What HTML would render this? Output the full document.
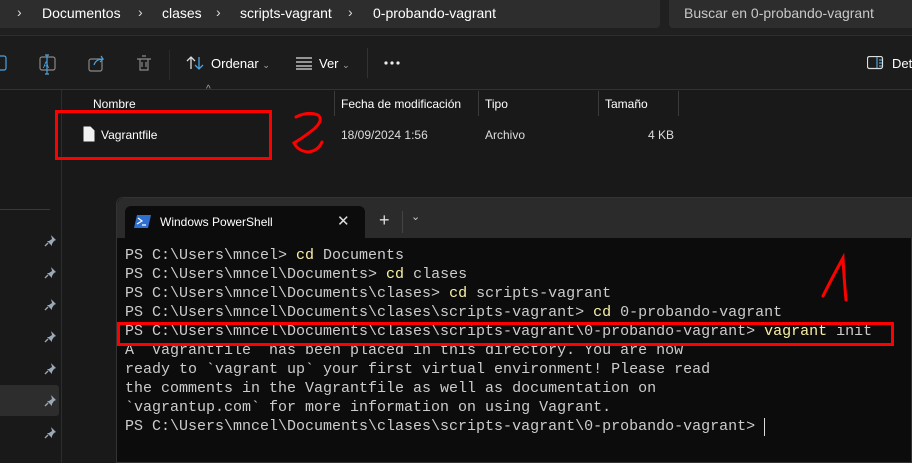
<!DOCTYPE html>
<html><head><meta charset="utf-8"><style>
*{margin:0;padding:0;box-sizing:border-box}
body{width:912px;height:463px;overflow:hidden;background:#191919;font-family:"Liberation Sans",sans-serif;position:relative;color:#fff}
.abs{position:absolute}
.t{font-size:13px;white-space:nowrap}
.term{font-family:"Liberation Mono",monospace;font-size:15px;line-height:19px;color:#cccccc;white-space:pre}
.y{color:#f9f1a5}
</style></head><body>
<div class="abs" style="left:0;top:0;width:912px;height:35px;background:#202020"></div>
<div class="abs" style="left:0;top:0;width:660px;height:28px;background:#2d2d2d;border-radius:0 0 4px 0"></div>
<div class="abs" style="left:669px;top:0;width:243px;height:28px;background:#2d2d2d;border-radius:0 0 0 4px"></div>
<div class="abs" style="left:0;top:35px;width:912px;height:1px;background:#2e2e2e"></div>
<div class="abs t" style="left:17px;top:4px;font-size:14px;color:#ddd;word-spacing:0">›</div>
<div class="abs t" style="left:42px;top:5px;font-size:14px">Documentos</div>
<div class="abs t" style="left:138px;top:4px;font-size:14px;color:#ddd">›</div>
<div class="abs t" style="left:162px;top:5px;font-size:14px">clases</div>
<div class="abs t" style="left:216px;top:4px;font-size:14px;color:#ddd">›</div>
<div class="abs t" style="left:240px;top:5px;font-size:14px">scripts-vagrant</div>
<div class="abs t" style="left:348px;top:4px;font-size:14px;color:#ddd">›</div>
<div class="abs t" style="left:373px;top:5px;font-size:14px">0-probando-vagrant</div>
<div class="abs t" style="left:684px;top:5px;font-size:14px;color:#c8c8c8">Buscar en 0-probando-vagrant</div>
<!-- toolbar -->
<div class="abs" style="left:0;top:36px;width:912px;height:54px;background:#1c1c1c"></div>
<div class="abs" style="left:0;top:89px;width:912px;height:1px;background:#333"></div>
<svg class="abs" style="left:0;top:50px" width="170" height="30" fill="none" stroke-width="1.2">
<rect x="-6" y="6" width="12" height="14" rx="2" stroke="#4aa3df"/>
<rect x="40" y="7" width="15" height="13" rx="2" stroke="#888"/><path d="M47 5v19M45 5h4M45 24h4" stroke="#4aa3df"/><text x="43" y="18" font-size="9" fill="#4aa3df" stroke="none" font-family="Liberation Sans">A</text>
<rect x="89" y="9" width="13" height="12" rx="2" stroke="#888"/><path d="M94 15q2-6 9-6l-2-3M103 9l-3 3" stroke="#4aa3df"/>
<path d="M137 9h14M140 9v11h8V9M142 6h4M142 12v5M146 12v5" stroke="#888"/>
<line x1="170" y1="0" x2="170" y2="30" stroke="#333"/>
</svg>
<svg class="abs" style="left:186px;top:55px" width="20" height="16" fill="none" stroke-width="1.3"><path d="M5 14V2M1 6l4-4 4 4" stroke="#ddd"/><path d="M13 2v12M9 10l4 4 4-4" stroke="#4aa3df"/></svg>
<div class="abs t" style="left:211px;top:56px">Ordenar <span style="font-size:9px;color:#aaa">⌄</span></div>
<svg class="abs" style="left:296px;top:56px" width="18" height="14" stroke="#ddd" stroke-width="1.2"><path d="M0 2h16M0 6h16M0 10h16M0 13h16"/></svg>
<div class="abs t" style="left:319px;top:56px">Ver <span style="font-size:9px;color:#aaa">⌄</span></div>
<div class="abs" style="left:367px;top:48px;width:1px;height:30px;background:#333"></div>
<svg class="abs" style="left:384px;top:61px" width="20" height="4" fill="#eee"><circle cx="2" cy="2" r="1.6"/><circle cx="8" cy="2" r="1.6"/><circle cx="14" cy="2" r="1.6"/></svg>
<svg class="abs" style="left:867px;top:56px" width="18" height="14" fill="none" stroke-width="1.2"><rect x="0.5" y="0.5" width="15" height="12" rx="2" stroke="#ddd"/><path d="M10 1v11M12 4h3M12 7h3M12 10h3" stroke="#4aa3df"/></svg>
<div class="abs t" style="left:892px;top:56px">Deta</div>
<!-- sidebar -->
<div class="abs" style="left:61px;top:90px;width:1px;height:373px;background:#2c2c2c"></div>
<div class="abs" style="left:0;top:209px;width:50px;height:1px;background:#3a3a3a"></div>
<div class="abs" style="left:0;top:385px;width:59px;height:31px;background:#2d2d2d;border-radius:0 3px 3px 0"></div>
<svg class="abs" style="left:44px;top:234px" width="14" height="210" fill="#9aa8b8">
<g id="p"><path d="M7 1l5 5-2 1-2 3 0 2-5-5 2 0 3-2z"/><path d="M4 9l-3 3" stroke="#9aa8b8" stroke-width="1.3"/></g>
<use href="#p" y="32"/><use href="#p" y="64"/><use href="#p" y="96"/><use href="#p" y="128"/><use href="#p" y="160"/><use href="#p" y="192"/>
</svg>
<!-- header -->
<div class="abs t" style="left:206px;top:84px;font-size:10px;color:#aaa">^</div>
<div class="abs t" style="left:93px;top:97px;font-size:12px">Nombre</div>
<div class="abs" style="left:334px;top:91px;width:1px;height:25px;background:#3a3a3a"></div>
<div class="abs t" style="left:341px;top:97px;font-size:12px">Fecha de modificación</div>
<div class="abs" style="left:478px;top:91px;width:1px;height:25px;background:#3a3a3a"></div>
<div class="abs t" style="left:485px;top:97px;font-size:12px">Tipo</div>
<div class="abs" style="left:598px;top:91px;width:1px;height:25px;background:#3a3a3a"></div>
<div class="abs t" style="left:605px;top:97px;font-size:12px">Tamaño</div>
<div class="abs" style="left:678px;top:91px;width:1px;height:25px;background:#3a3a3a"></div>
<svg class="abs" style="left:83px;top:126px" width="12" height="16"><path d="M0.5 0.5h7l4 4v11h-11z" fill="#f2f2f2"/></svg>
<div class="abs t" style="left:101px;top:128px;font-size:12px">Vagrantfile</div>
<div class="abs t" style="left:341px;top:128px;font-size:12px;color:#ddd">18/09/2024 1:56</div>
<div class="abs t" style="left:485px;top:128px;font-size:12px;color:#ddd">Archivo</div>
<div class="abs t" style="left:648px;top:128px;font-size:12px;color:#ddd">4 KB</div>
<div class="abs" style="left:55px;top:110px;width:217px;height:50px;border:3px solid #f00"></div>
<svg class="abs" style="left:290px;top:108px" width="60" height="60" fill="none" stroke="#f00" stroke-width="3" stroke-linecap="round"><path d="M6 9q12-6 22-2q6 5-4 14q-10 8-20 14q4 8 14 9q10-1 14-10"/></svg>
<!-- terminal -->
<div class="abs" style="left:116px;top:197px;width:796px;height:266px;background:#0c0c0c;border-radius:7px 0 0 0;border:1px solid #333"></div>
<div class="abs" style="left:117px;top:198px;width:795px;height:40px;background:#2b2b2b;border-radius:7px 0 0 0"></div>
<div class="abs" style="left:125px;top:206px;width:240px;height:33px;background:#0c0c0c;border-radius:6px 6px 0 0"></div>
<svg class="abs" style="left:134px;top:215px" width="17" height="13"><path d="M3 0h14l-3 13H0z" fill="#2f6fd0"/><path d="M4 3l4 3-5 3M8 10h4" stroke="#fff" stroke-width="1.2" fill="none"/></svg>
<div class="abs t" style="left:160px;top:215px;font-size:12px">Windows PowerShell</div>
<div class="abs t" style="left:337px;top:212px;font-size:15px;color:#ddd">✕</div>
<div class="abs t" style="left:379px;top:210px;font-size:18px;color:#ddd">+</div>
<div class="abs" style="left:402px;top:211px;width:1px;height:22px;background:#444"></div>
<div class="abs t" style="left:411px;top:210px;font-size:11px;color:#ccc">⌄</div>
<div class="abs term" style="left:125px;top:246px">PS C:\Users\mncel&gt; <span class="y">cd</span> Documents
PS C:\Users\mncel\Documents&gt; <span class="y">cd</span> clases
PS C:\Users\mncel\Documents\clases&gt; <span class="y">cd</span> scripts-vagrant
PS C:\Users\mncel\Documents\clases\scripts-vagrant&gt; <span class="y">cd</span> 0-probando-vagrant
PS C:\Users\mncel\Documents\clases\scripts-vagrant\0-probando-vagrant&gt; <span class="y">vagrant</span> init
A `Vagrantfile` has been placed in this directory. You are now
ready to `vagrant up` your first virtual environment! Please read
the comments in the Vagrantfile as well as documentation on
`vagrantup.com` for more information on using Vagrant.
PS C:\Users\mncel\Documents\clases\scripts-vagrant\0-probando-vagrant&gt; </div>
<div class="abs" style="left:764px;top:418px;width:1px;height:18px;background:#ddd"></div>
<div class="abs" style="left:117px;top:322px;width:777px;height:24px;border:3px solid #f00"></div>
<svg class="abs" style="left:820px;top:250px" width="40" height="60" fill="none" stroke="#f00" stroke-width="3" stroke-linecap="round"><path d="M3 46q10-20 20-38q1 20 3 42"/></svg>
</body></html>
